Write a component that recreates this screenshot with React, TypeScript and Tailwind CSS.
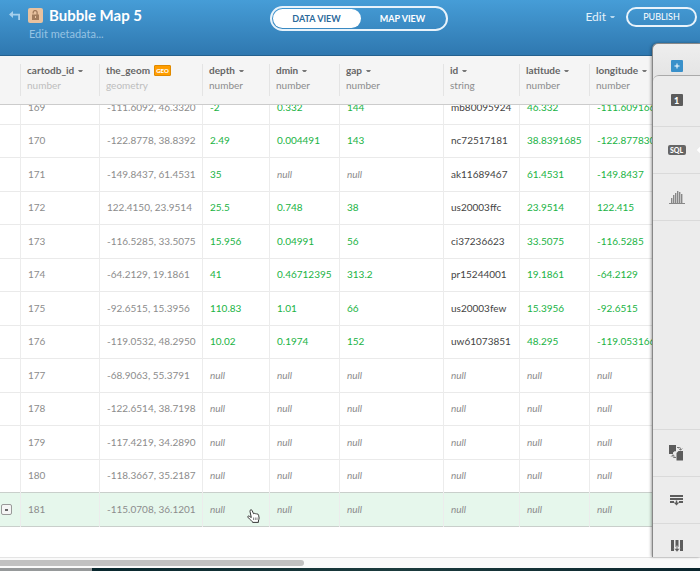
import React from "react";

type Column = { name: string; type: string; width: string; geo?: boolean; system?: boolean };

const columns: Column[] = [
  { name: "cartodb_id", type: "number", width: "w-[79px]", system: true },
  { name: "the_geom", type: "geometry", width: "w-[103px]", geo: true, system: true },
  { name: "depth", type: "number", width: "w-[67px]" },
  { name: "dmin", type: "number", width: "w-[70px]" },
  { name: "gap", type: "number", width: "w-[104px]" },
  { name: "id", type: "string", width: "w-[76px]" },
  { name: "latitude", type: "number", width: "w-[70px]" },
  { name: "longitude", type: "number", width: "w-[111px]" },
];

const rows: string[][] = [
  ["169", "-111.6092, 46.3320", "-2", "0.332", "144", "mb80095924", "46.332", "-111.6091667"],
  ["170", "-122.8778, 38.8392", "2.49", "0.004491", "143", "nc72517181", "38.8391685", "-122.8778305"],
  ["171", "-149.8437, 61.4531", "35", "null", "null", "ak11689467", "61.4531", "-149.8437"],
  ["172", "122.4150, 23.9514", "25.5", "0.748", "38", "us20003ffc", "23.9514", "122.415"],
  ["173", "-116.5285, 33.5075", "15.956", "0.04991", "56", "ci37236623", "33.5075", "-116.5285"],
  ["174", "-64.2129, 19.1861", "41", "0.46712395", "313.2", "pr15244001", "19.1861", "-64.2129"],
  ["175", "-92.6515, 15.3956", "110.83", "1.01", "66", "us20003few", "15.3956", "-92.6515"],
  ["176", "-119.0532, 48.2950", "10.02", "0.1974", "152", "uw61073851", "48.295", "-119.0531667"],
  ["177", "-68.9063, 55.3791", "null", "null", "null", "null", "null", "null"],
  ["178", "-122.6514, 38.7198", "null", "null", "null", "null", "null", "null"],
  ["179", "-117.4219, 34.2890", "null", "null", "null", "null", "null", "null"],
  ["180", "-118.3667, 35.2187", "null", "null", "null", "null", "null", "null"],
  ["181", "-115.0708, 36.1201", "null", "null", "null", "null", "null", "null"],
];

function Caret({ className }: { className: string }) {
  return (
    <svg viewBox="0 0 5 2" className={`h-[2px] w-[5px] shrink-0 ${className}`} aria-hidden="true">
      <path d="M0 0h5L3.500 2h-2z" fill="currentColor" />
    </svg>
  );
}

function cellColor(value: string, index: number) {
  if (value === "null") return "italic text-[#8c8c8c]";
  if (index < 2) return "text-[#8c8c8c]";
  if (index === 5) return "text-[#444]";
  return "text-[#20b344]";
}

function TopBar() {
  return (
    <header className="flex h-14 shrink-0 items-start border-b border-[#24618f] bg-linear-to-b from-[#469dd7] to-[#2f78b0] text-white">
      <div className="flex flex-1 items-start pt-[7px] pl-[9px]">
        <button aria-label="Back" className="mt-1 text-[#a5cfec]">
          <svg viewBox="0 0 11 9" className="h-[9px] w-[11px]" fill="currentColor">
            <path d="M0 3.500 4 0v2.700h7V9H9.200V4.500H4V7z" />
          </svg>
        </button>
        <div className="ml-2">
          <div className="flex h-4 items-center">
            <span className="flex size-[15px] items-center justify-center rounded-[2px] bg-[#e8c29f]">
              <svg viewBox="0 0 9 10" className="h-[10px] w-[9px]">
                <path d="M2.200 3.500V2.500a1.900 1.900 0 0 1 3.900 0V5" fill="none" stroke="#a17c5d" strokeWidth="1.300" />
                <path d="M1 4.500h7V10H1z" fill="#a17c5d" />
                <path d="M4 6h1v2H4z" fill="#e8c29f" />
              </svg>
            </span>
            <h1 className="ml-1.5 text-[15px] leading-4 font-bold whitespace-nowrap">Bubble Map 5</h1>
          </div>
          <a href="#metadata" className="mt-1 block pl-px text-[11px] leading-[14px] text-[#96c3e3]">
            Edit metadata...
          </a>
        </div>
      </div>
      <div className="mt-1.5 ml-[11px] flex h-[25px] w-[178px] rounded-full border-2 border-[#e8f3fb] p-px text-[9px] font-bold">
        <button className="w-[88px] rounded-full bg-white text-[#2c6a9b]">DATA VIEW</button>
        <button className="flex-1">MAP VIEW</button>
      </div>
      <div className="mt-1.5 flex flex-1 items-center justify-end pr-[3px]">
        <button className="mr-[11px] flex items-center gap-1 text-[12px] leading-[22px] text-[#e4f1fa]">
          Edit <Caret className="text-[#b8d9ef]" />
        </button>
        <button className="h-5 w-[71px] rounded-full border-2 border-[#e8f3fb] text-[9px] leading-4">PUBLISH</button>
      </div>
    </header>
  );
}

function DataTable() {
  return (
    <table className="w-[700px] table-fixed border-separate border-spacing-0 text-left text-[10px]">
      <thead>
        <tr className="h-[49px] bg-[#f5f5f5]">
          <th className="w-5 border-b border-[#ccc]" aria-label="Row options" />
          {columns.map((c) => (
            <th key={c.name} className={`${c.width} border-b border-[#ccc] p-0 align-middle font-normal`}>
              <div className="h-8 border-l border-[#e4e4e4] pl-1.5">
                <div className="flex h-[13px] items-center gap-1 font-bold text-[#666]">
                  {c.name}
                  {c.geo ? (
                    <span className="flex h-[11px] w-[17px] shrink-0 items-center justify-center rounded-[1px] border border-[#e08a00] bg-[#ff9d00] text-[6px] leading-none font-black text-white">
                      GEO
                    </span>
                  ) : (
                    <Caret className="text-[#777]" />
                  )}
                </div>
                <div className={`h-4 leading-4 ${c.system ? "text-[#bdbdbd]" : "text-[#8c8c8c]"}`}>{c.type}</div>
              </div>
            </th>
          ))}
        </tr>
      </thead>
      <tbody>
        {rows.map((row, r) => {
          const active = r === rows.length - 1;
          const height = r === 0 ? "h-5" : r % 2 ? "h-[33px]" : "h-[34px]";
          const line = active || r === rows.length - 2 ? "border-[#c9cfcb]" : "border-[#eaeaea]";
          return (
            <tr key={row[0]} className={active ? "bg-[#e6f7ec]" : "bg-white"}>
              <td className={`border-b p-0 ${line}`}>
                {active && (
                  <button
                    aria-label="Row menu"
                    className="ml-px flex size-[11px] items-center justify-center rounded-[2px] border border-[#999] bg-[#f5f5f5]"
                  >
                    <span className="h-[2px] w-[3px] bg-[#666]" />
                  </button>
                )}
              </td>
              {row.map((value, i) => (
                <td key={i} className={`border-b p-0 ${line}`}>
                  <div className={`-mb-px flex items-end overflow-hidden border-l border-[#ececec] pl-[7px] ${height}`}>
                    <span className={`h-9 leading-9 whitespace-nowrap ${cellColor(value, i)}`}>{value}</span>
                  </div>
                </td>
              ))}
            </tr>
          );
        })}
      </tbody>
    </table>
  );
}

function SqlIcon() {
  return (
    <span className="flex h-[10px] w-[18px] items-center justify-center rounded-[2px] bg-[#666] text-[7px] leading-none font-black text-white">
      SQL
    </span>
  );
}

function BarsIcon() {
  return (
    <svg viewBox="0 0 16 13" className="h-[13px] w-4" fill="#888">
      <path d="M0 12h16v1H0zM2 7h1.400v5H2zM4 4h1.400v8H4zM6 2h1.400v10H6zM8 0h1.400v12H8zM10 1h1.400v11H10zM12 3h1.400v9H12z" />
    </svg>
  );
}

function MergeIcon() {
  return (
    <svg viewBox="0 0 15 16" className="h-4 w-[15px]">
      <path d="M0 0h7v9H0zM7.500 8l2-2H14v9.500H7.500z" fill="#5c5c5c" />
      <path d="M8 2.500h2.500q1 0 1 1V5M9.800 3.500 11.500 5.300 13.200 3.500" fill="none" stroke="#777" />
      <path d="M7 12.500H5q-1 0-1-1V10M2.300 11.500 4 9.700 5.700 11.500" fill="none" stroke="#777" />
      <path d="M4 9V7.500l1.500-1.200H7V9z" fill="#ececec" />
    </svg>
  );
}

function AddRowIcon() {
  return (
    <svg viewBox="0 0 13 11" className="h-[11px] w-[13px]" fill="#5c5c5c">
      <path d="M0 0h13v2H0zM0 3h13v2H0zM0 6h4v2H0zM9 6h4v2H9z" />
      <path d="M5.800 5.500h1.400v2H9.300L6.500 10.500 3.700 7.500h2.100z" />
    </svg>
  );
}

function AddColumnIcon() {
  return (
    <svg viewBox="0 0 12 13" className="h-[13px] w-3" fill="#5c5c5c">
      <path d="M0 0h3v11H0zM4.500 0h3v7h-3zM9 0h3v11H9z" />
      <path d="M5.300 6h1.400v2.500H9L6 12 3 8.500h2.300z" stroke="#ececec" strokeWidth=".5" />
    </svg>
  );
}

function SidePanel() {
  const item = "flex h-[47px] w-full items-center justify-center border-[#dadada]";
  return (
    <aside className="absolute top-[43px] right-0 bottom-[14px] flex w-12 flex-col overflow-hidden rounded-tl-md border-t border-l border-[#888] bg-linear-to-b from-[#eee] from-0% to-[#e2e2e2] to-8% shadow-[-1px_0_3px_rgba(0,0,0,0.35)]">
      <div className="flex h-[31px] shrink-0 items-end justify-center pb-[3px]">
        <button aria-label="Add layer" className="flex size-3 items-center justify-center rounded-[1px] bg-[#3990ca]">
          <svg viewBox="0 0 6 6" className="size-[6px]">
            <path d="M3 .5v5M.5 3h5" stroke="#fff" />
          </svg>
        </button>
      </div>
      <div className="flex flex-1 flex-col rounded-tl-md border-t border-[#aaa] bg-[#ececec]">
        <button aria-label="Layer 1" className="flex h-[51px] items-center justify-center border-b border-[#dadada] pb-0.5">
          <span className="flex size-3 items-center justify-center rounded-[1px] bg-[#5c5c5c] text-[9px] leading-none font-black text-white">1</span>
        </button>
        <button aria-label="SQL" className={`${item} relative border-b`}>
          <SqlIcon />
          <span className="absolute -right-1 size-[6px] rotate-45 bg-white" />
        </button>
        <button aria-label="Filters" className={`${item} border-b`}>
          <BarsIcon />
        </button>
        <div className="flex-1" />
        <button aria-label="Merge tables" className={`${item} border-t`}>
          <MergeIcon />
        </button>
        <button aria-label="Add row" className={`${item} border-t`}>
          <AddRowIcon />
        </button>
        <button aria-label="Add column" className="flex h-[34px] items-end justify-center border-t border-[#dadada] pb-1">
          <AddColumnIcon />
        </button>
      </div>
    </aside>
  );
}

function HandCursor() {
  return (
    <svg viewBox="0 0 13 14" className="absolute top-[509px] left-[247px] h-[14px] w-[13px]" aria-hidden="true">
      <path
        d="M3.200 1.200c.8-.9 1.700-.3 2 .5l1.300 3c.6-.6 1.400-.4 1.700.2.600-.5 1.400-.3 1.700.3.900-.4 1.600.1 1.700 1l.5 2.800c.1 1.300-.6 1.800-.7 3v1.400H5.600c-.3-1.600-2-2.200-3.200-3.500L.8 8.100c-.4-.8.700-1.500 1.600-.8L4.300 8.500 3 2.500z"
        fill="#fff"
        stroke="#222"
        strokeWidth=".9"
      />
      <path d="M6.500 8.500v2.500M8.300 8.500v2.500M10 8.500v2.500" stroke="#555" strokeWidth=".7" />
    </svg>
  );
}

export default function App() {
  return (
    <div className="relative flex min-h-screen flex-col overflow-hidden bg-white font-['Lato',sans-serif]">
      <TopBar />
      <main className="flex-1 overflow-hidden">
        <DataTable />
      </main>
      <footer className="shrink-0">
        <div className="flex h-[11px] items-center border-t border-[#e4e4e4] bg-[#fafafa]">
          <div className="h-[6px] w-[304px] rounded-r-full bg-[#c1c1c1]" />
        </div>
        <div className="flex h-[3px]">
          <div className="w-[92px] bg-[#96999a]" />
          <div className="flex-1 bg-linear-to-r from-[#08272d] via-[#1b3b3d] to-[#0b252d]" />
        </div>
      </footer>
      <SidePanel />
      <HandCursor />
    </div>
  );
}
